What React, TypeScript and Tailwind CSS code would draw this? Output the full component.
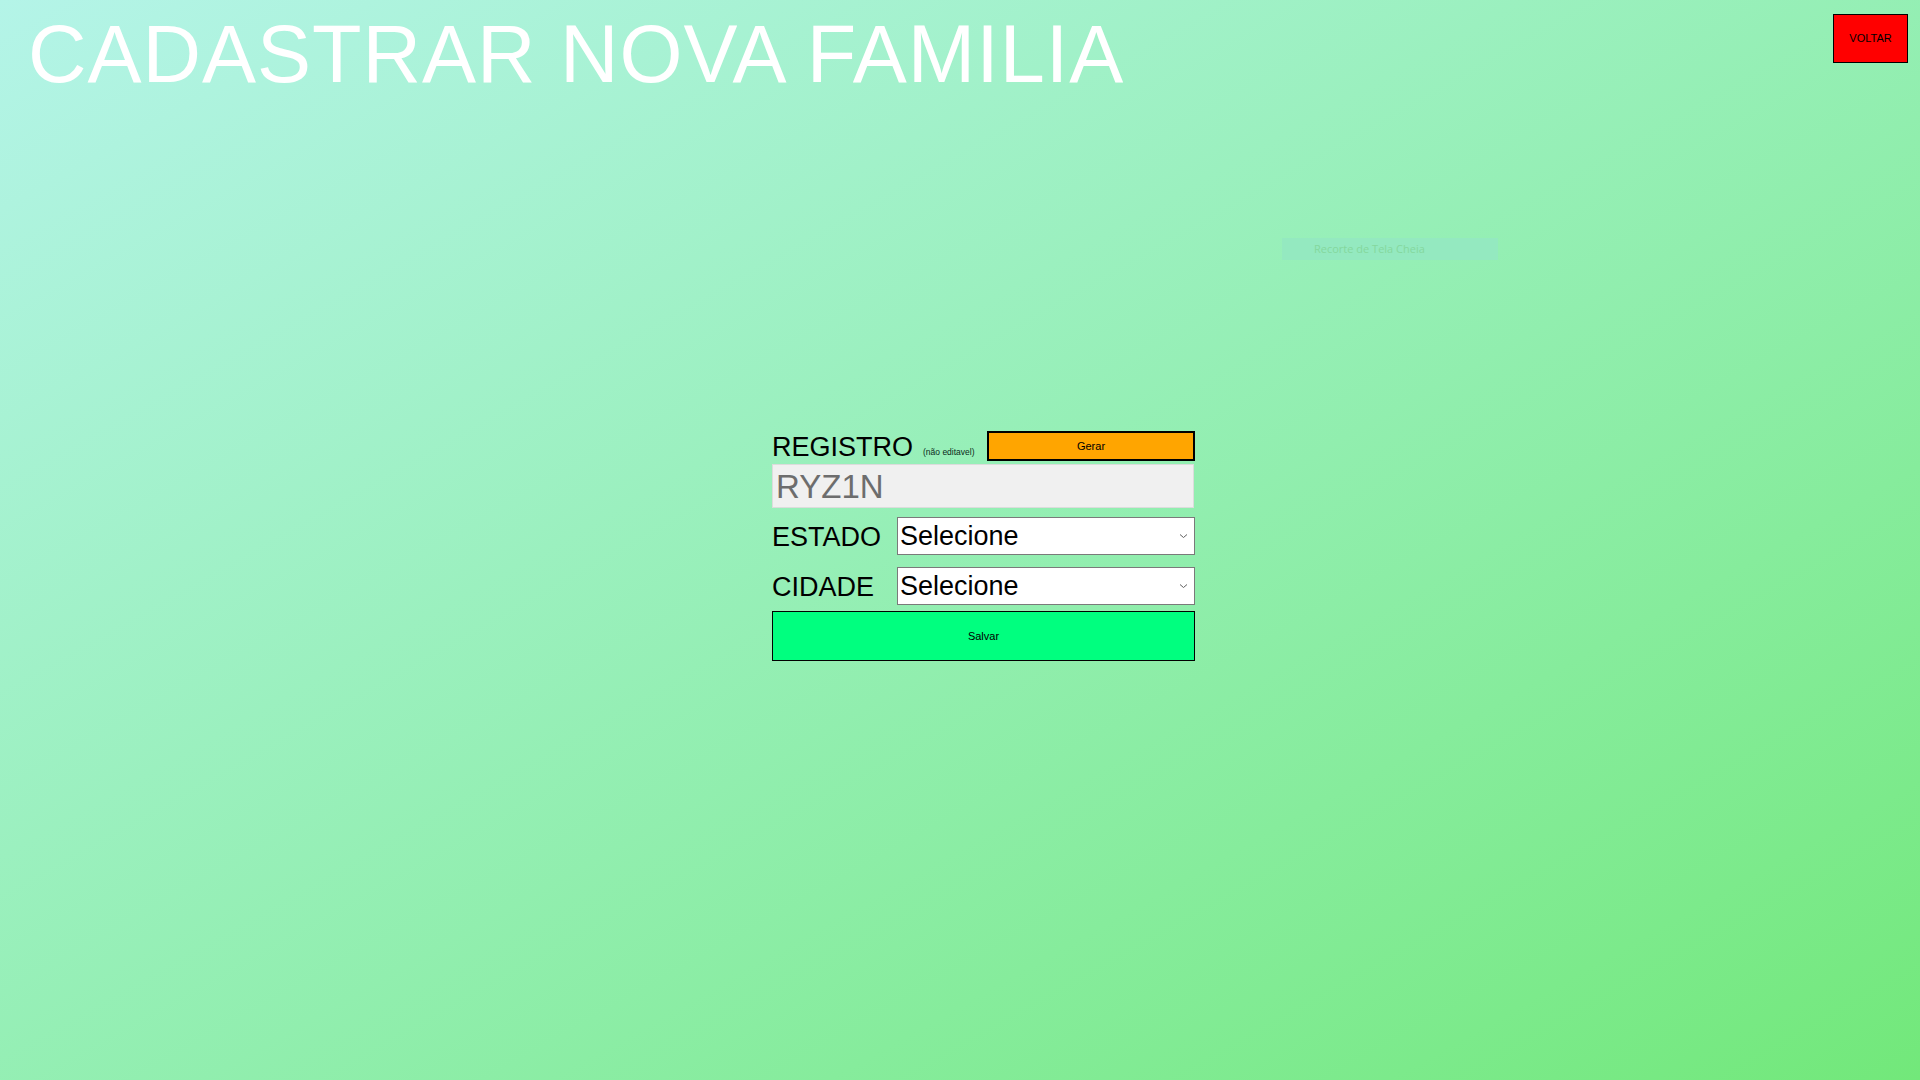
import React from 'react';

const App: React.FC = () => {
    return (
        <div className="relative w-full h-screen overflow-hidden bg-linear-to-br from-[#b4f4e8] to-[#72e87a] font-['Liberation_Sans',Arial,sans-serif]">
            <Header />
            <ScreenClipHint />
            <FamilyForm />
        </div>
    );
};

const Header: React.FC = () => (
    <header className="flex items-start justify-between">
        <h1 className="pt-[14px] pl-[28px] text-[81px] leading-none tracking-[1px] text-white font-normal whitespace-nowrap">
            CADASTRAR NOVA FAMILIA
        </h1>
        <button className="mt-[14px] mr-[12px] w-[75px] h-[49px] bg-[#ff0000] border border-black text-[11px] text-black">
            VOLTAR
        </button>
    </header>
);

// faint leftover from the windows snipping overlay
const ScreenClipHint: React.FC = () => (
    <div className="absolute left-[1282px] top-[238px] w-[216px] h-[22px] bg-[#94e9c0] flex items-center pl-[32px] text-[11px] text-[#84d89e] font-['Open_Sans',sans-serif]">
        Recorte de Tela Cheia
    </div>
);

const Chevron: React.FC = () => (
    <svg width="9" height="6" viewBox="0 0 9 6" className="text-[#606060]">
        <path d="M1 1.5 L4.5 4.5 L8 1.5" fill="none" stroke="currentColor" strokeWidth="1" />
    </svg>
);

const SelectBox: React.FC = () => (
    <div className="w-[298px] h-[38px] bg-white border border-[#7a7a7a] flex items-center justify-between pl-[2px] pr-[6px]">
        <span className="text-[27px] leading-none text-black">Selecione</span>
        <Chevron />
    </div>
);

const FamilyForm: React.FC = () => (
    <main className="pl-[772px] mt-[336px]">
        <div className="w-[423px] flex flex-col">
            <div className="flex items-end h-[30px]">
                <span className="text-[27px] leading-none text-black">REGISTRO</span>
                <span className="ml-[10px] mb-[5px] text-[8.5px] leading-none text-[#0a2a1a]">(não editavel)</span>
                <button className="ml-auto w-[208px] h-[30px] bg-[#ffa500] border-2 border-black text-[11px] text-black">
                    Gerar
                </button>
            </div>
            <div className="mt-[3px] w-[422px] h-[44px] bg-[#f0f0f0] border border-[#dcdcdc] flex items-center pl-[3px]">
                <span className="text-[33px] leading-none text-[#6d6d6d]">RYZ1N</span>
            </div>
            <div className="mt-[9px] flex items-center justify-between">
                <span className="text-[27px] leading-none text-black pt-[2px]">ESTADO</span>
                <SelectBox />
            </div>
            <div className="mt-[12px] flex items-center justify-between">
                <span className="text-[27px] leading-none text-black pt-[2px]">CIDADE</span>
                <SelectBox />
            </div>
            <button className="mt-[6px] w-[423px] h-[50px] bg-[#00ff7f] border border-black text-[11px] text-black">
                Salvar
            </button>
        </div>
    </main>
);

export default App;
